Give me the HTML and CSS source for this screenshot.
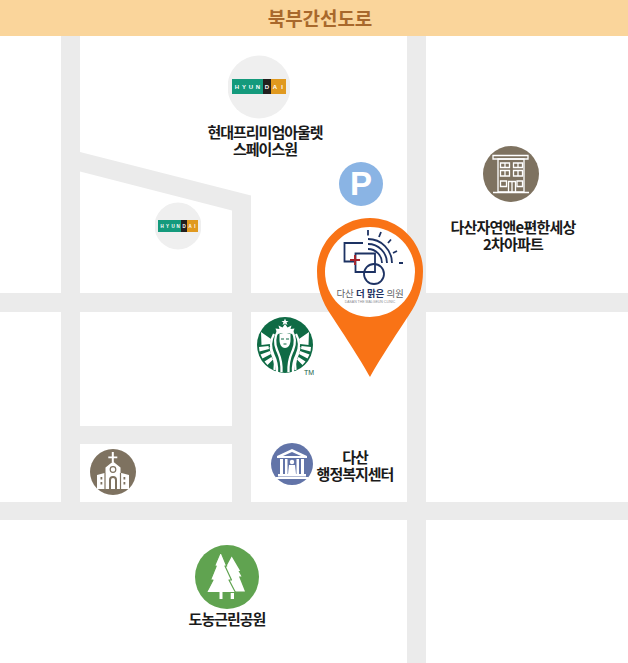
FILE: index.html
```html
<!DOCTYPE html>
<html lang="ko">
<head>
<meta charset="utf-8">
<title>오시는 길</title>
<link rel="stylesheet" href="styles.css">
</head>
<body>
<main class="map">
  <header class="road-title">북부간선도로</header>
  <svg class="roads" width="628" height="627" viewBox="0 36 628 627">
    <path d="M61 36h19v116L251 195.500V293h156V36h19v257h202v19H426v190h202v18H426v143h-19V520H0v-18h61V312H0v-19h61zM80 171.500V293h152V210.500zM80 312v114h152V312zM80 444v58h152v-58zM251 312v190h156V312z" fill="#ebebeb" fill-rule="evenodd"/>
  </svg>

  <div class="marker hd-big">
    <svg width="62" height="64" viewBox="0 0 62 64">
      <circle cx="31" cy="32" r="31.500" fill="#efefef"/>
      <rect x="4" y="24" width="31" height="15" fill="#149a7c"/>
      <rect x="35" y="24" width="8" height="15" fill="#231f1e"/>
      <rect x="43" y="24" width="15" height="15" fill="#e0991f"/>
      <g fill="#fff" font-family="'Liberation Sans',sans-serif" font-size="6" font-weight="700" text-anchor="middle">
        <text x="9" y="33.500">H</text><text x="16" y="33.500">Y</text><text x="23" y="33.500">U</text><text x="30" y="33.500">N</text><text x="39" y="33.500">D</text><text x="47" y="33.500">A</text><text x="54" y="33.500">I</text>
      </g>
    </svg>
  </div>
  <p class="label label-hd">현대프리미엄아울렛<br>스페이스원</p>

  <div class="marker hd-small">
    <svg width="46" height="48" viewBox="0 0 46 48">
      <circle cx="23" cy="24" r="23.500" fill="#efefef"/>
      <rect x="3" y="18" width="23" height="12" fill="#149a7c"/>
      <rect x="26" y="18" width="6" height="12" fill="#231f1e"/>
      <rect x="32" y="18" width="11" height="12" fill="#e0991f"/>
      <g fill="#fff" font-family="'Liberation Sans',sans-serif" font-size="4.500" font-weight="700" text-anchor="middle">
        <text x="7" y="25.500">H</text><text x="12.500" y="25.500">Y</text><text x="18" y="25.500">U</text><text x="23" y="25.500">N</text><text x="29" y="25.500">D</text><text x="35" y="25.500">A</text><text x="40" y="25.500">I</text>
      </g>
    </svg>
  </div>

  <div class="marker parking">P</div>

  <div class="marker apt">
    <svg width="56" height="56" viewBox="0 0 56 56">
      <circle cx="28" cy="28" r="28" fill="#7e7260"/>
      <g fill="none" stroke="#fff" stroke-width="1.300">
        <path d="M10 9.500h35v3.500H10z"/>
        <path d="M15 13h26v33H15z"/>
        <path d="M17.500 17h9v4.500h-9zM30.500 17h9v4.500h-9zM17.500 24.500h9V30h-9zM30.500 24.500h9V30h-9zM17.500 35h6v5.500h-6zM34 35h5.500v5.500H34z"/>
        <path d="M22 17v4.500M35 17v4.500M22 24.500V30M35 24.500V30"/>
        <path d="M25.500 46V35.500h7V46M29 35.500V46M10 46.500h36"/>
      </g>
    </svg>
  </div>
  <p class="label label-apt">다산자연앤e편한세상<br>2차아파트</p>

  <div class="marker pin">
    <svg width="106" height="160" viewBox="0 0 106 160">
      <path d="M53 159 C46 146 28 118 14 97 C5 84 0 70 0 53 C0 24 24 0 53 0 C82 0 106 24 106 53 C106 70 101 84 92 97 C78 118 60 146 53 159Z" fill="#f97316"/>
      <circle cx="53" cy="54" r="45" fill="#fff"/>
      <g fill="none" stroke="#1d3263" stroke-width="1.800">
        <path d="M46 25H27.500V43.500H37"/>
        <path d="M38.500 35.500H58V54H38.500z"/>
        <circle cx="57" cy="56" r="10"/>
        <path d="M51 21a24 24 0 0124 24M51 26a19 19 0 0119 19M51 31a14 14 0 0114 14"/>
        <path d="M51 12v5.500M64 14l-2 5M74 21.500l-3 3.500M80 33l-4 2M86 45h-4"/>
      </g>
      <path d="M38 37v10M33 42h10" stroke="#a8242b" stroke-width="1.900" fill="none"/>
      <text class="pin-name" x="53" y="78.500" text-anchor="middle">다산 <tspan class="pin-strong">더 맑은</tspan> 의원</text>
      <text class="pin-sub" x="53" y="85" text-anchor="middle">DASAN THE MALGEUN CLINIC</text>
    </svg>
  </div>

  <div class="marker starbucks">
    <svg width="56" height="56" viewBox="0 0 56 56">
      <defs>
        <g id="siren-side">
          <path d="M4 15l10 7-1 5-8.500 1zM2 30l9.500-1 .5 3-9.500 2.500zM3.500 37.500l9.500-3.500 1 3-8.500 4.500zM7.500 44.500l7-4.500 1.500 2.500-5.500 5.500z" fill="#fff"/>
          <g fill="none" stroke="#fff" stroke-width="2.300">
            <path d="M21 14c-3.500 6-3.500 13-1 19 2 5 5 9 4.500 22"/>
            <path d="M17 17c-4 7-3.500 15-.5 21 2.500 5 4 9 3.500 17"/>
            <path d="M13.500 30c.5 4 1.500 7 3.500 12 1 3 1.500 6 .5 11"/>
          </g>
        </g>
      </defs>
      <circle cx="28" cy="28" r="28" fill="#0f6b45"/>
      <path d="M28 1.500l1 2.500 2.500 0-2 1.500 1 2.500-2.500-1.500-2.500 1.500 1-2.500-2-1.500 2.500 0z" fill="#fff"/>
      <path d="M28 7l2.500 3.500 4-2-1 3.500 4-.5-2 5.500c-4-1.500-11-1.500-15 0l-2-5.500 4 .5-1-3.500 4 2z" fill="#fff"/>
      <use href="#siren-side"/>
      <use href="#siren-side" transform="matrix(-1 0 0 1 56 0)"/>
      <path d="M22.500 17c3-1.500 8-1.500 11 0v6c0 5-2.500 8-5.500 8s-5.500-3-5.500-8z" fill="#fff"/>
      <path d="M24 21.500h3v1h-3zM29 21.500h3v1h-3zM26.500 26.500h3v1h-3z" fill="#0f6b45"/>
    </svg>
    <span class="tm">TM</span>
  </div>

  <div class="marker hall">
    <svg width="42" height="42" viewBox="0 0 42 42">
      <circle cx="21" cy="21" r="21" fill="#6274a8"/>
      <g fill="#fff">
        <path d="M21 6L6 13v2h30v-2zM21 9l9 4H12z" fill-rule="evenodd"/>
        <path d="M9 16h3v15H9zM14 16h2.500v15H14zM25.500 16H28v15h-2.500zM30 16h3v15h-3zM7 31h28v2.500H7zM5 34h32v2H5z"/>
        <circle cx="21" cy="19" r="2.200"/>
        <path d="M18 22h6l1 9h-8z"/>
      </g>
    </svg>
  </div>
  <p class="label label-hall">다산<br>행정복지센터</p>

  <div class="marker church">
    <svg width="46" height="46" viewBox="0 0 46 46">
      <circle cx="23" cy="23" r="23" fill="#7e7260"/>
      <path d="M21.800 3h2v4.500h3.500v1.800h-3.500V13h-2V9.300h-3.500V7.500h3.500z" fill="#fff"/>
      <path d="M23 12.500l7.500 6V24h1l7.500 2v14H7V26l7.500-2h1v-5.500z" fill="#fff"/>
      <path d="M15 24v16M30.500 24v16" stroke="#7e7260" stroke-width="1.200"/>
      <circle cx="23" cy="20.500" r="2.800" fill="none" stroke="#7e7260" stroke-width="1.200"/>
      <path d="M19 40V31a4 4 0 018 0v9z" fill="#7e7260"/>
      <path d="M21 40V31a2 2 0 014 0v9z" fill="#fff"/>
      <path d="M10.500 28h1.800v2.400h-1.800zM10.500 33h1.800v2.400h-1.800zM33.500 28h1.800v2.400h-1.800zM33.500 33h1.800v2.400h-1.800z" fill="#7e7260"/>
    </svg>
  </div>

  <div class="marker park">
    <svg width="64" height="64" viewBox="0 0 64 64">
      <circle cx="32" cy="32" r="32" fill="#60a350"/>
      <path d="M36.700 11.500l-7 13 8 22-2 1V54H39v-7.500h11l-6-15h2.500l-3-5.500h1.700z" fill="#fff"/>
      <path d="M25.700 6.500L19.500 21h1.700L15.500 35h2.500l-6.500 12.500h29L34 35h2.500L30 21h1.700z" fill="#fff" stroke="#60a350" stroke-width="1.200" stroke-linejoin="round"/>
      <path d="M24.500 47h3v7h-3z" fill="#fff"/>
    </svg>
  </div>
  <p class="label label-park">도농근린공원</p>
</main>
</body>
</html>
```

FILE: styles.css
```css
* { box-sizing: border-box; }

html, body {
  margin: 0;
  background: #fff;
}

.map {
  position: relative;
  width: 628px;
  height: 663px;
  overflow: hidden;
  font-family: "Noto Sans CJK KR", "Noto Sans", sans-serif;
}

.road-title {
  height: 36px;
  padding-left: 12px;
  background: #fad59b;
  color: #a8682c;
  font-size: 19px;
  font-weight: 700;
  line-height: 35px;
  letter-spacing: -0.1px;
  text-align: center;
}

.roads {
  display: block;
}

.marker {
  position: absolute;
}

.marker svg {
  display: block;
}

.label {
  position: absolute;
  margin: 0;
  color: #1a1a1a;
  font-size: 15px;
  font-weight: 700;
  line-height: 17px;
  letter-spacing: -1px;
  text-align: center;
  white-space: nowrap;
}

.hd-big { left: 228px; top: 55px; }
.hd-small { left: 155px; top: 202px; }

.parking {
  left: 339px;
  top: 162px;
  width: 44px;
  height: 44px;
  border-radius: 50%;
  background: #8ab4e4;
  color: #fff;
  font: 700 33px/44px "Liberation Sans", sans-serif;
  text-align: center;
}

.apt { left: 483px; top: 146px; }
.pin { left: 317px; top: 218px; }
.starbucks { left: 257px; top: 317px; }

.tm {
  position: absolute;
  left: 47px;
  top: 51px;
  color: #17603f;
  font: 7px/9px "Liberation Sans", sans-serif;
}

.hall { left: 271px; top: 443px; }
.church { left: 90px; top: 449px; }
.park { left: 195px; top: 545px; }

.label-hd { left: 165px; top: 123px; width: 200px; }
.label-apt { left: 413px; top: 218px; width: 200px; letter-spacing: -0.8px; }
.label-hall { left: 255px; top: 448px; width: 200px; }
.label-park { left: 127px; top: 610px; width: 200px; }

.pin-name {
  fill: #5d5f66;
  font-size: 9.500px;
  letter-spacing: -0.200px;
}

.pin-strong {
  fill: #1d3263;
  font-weight: 700;
}

.pin-sub {
  fill: #8a8c92;
  font-family: "Liberation Sans", sans-serif;
  font-size: 3.500px;
}
```
